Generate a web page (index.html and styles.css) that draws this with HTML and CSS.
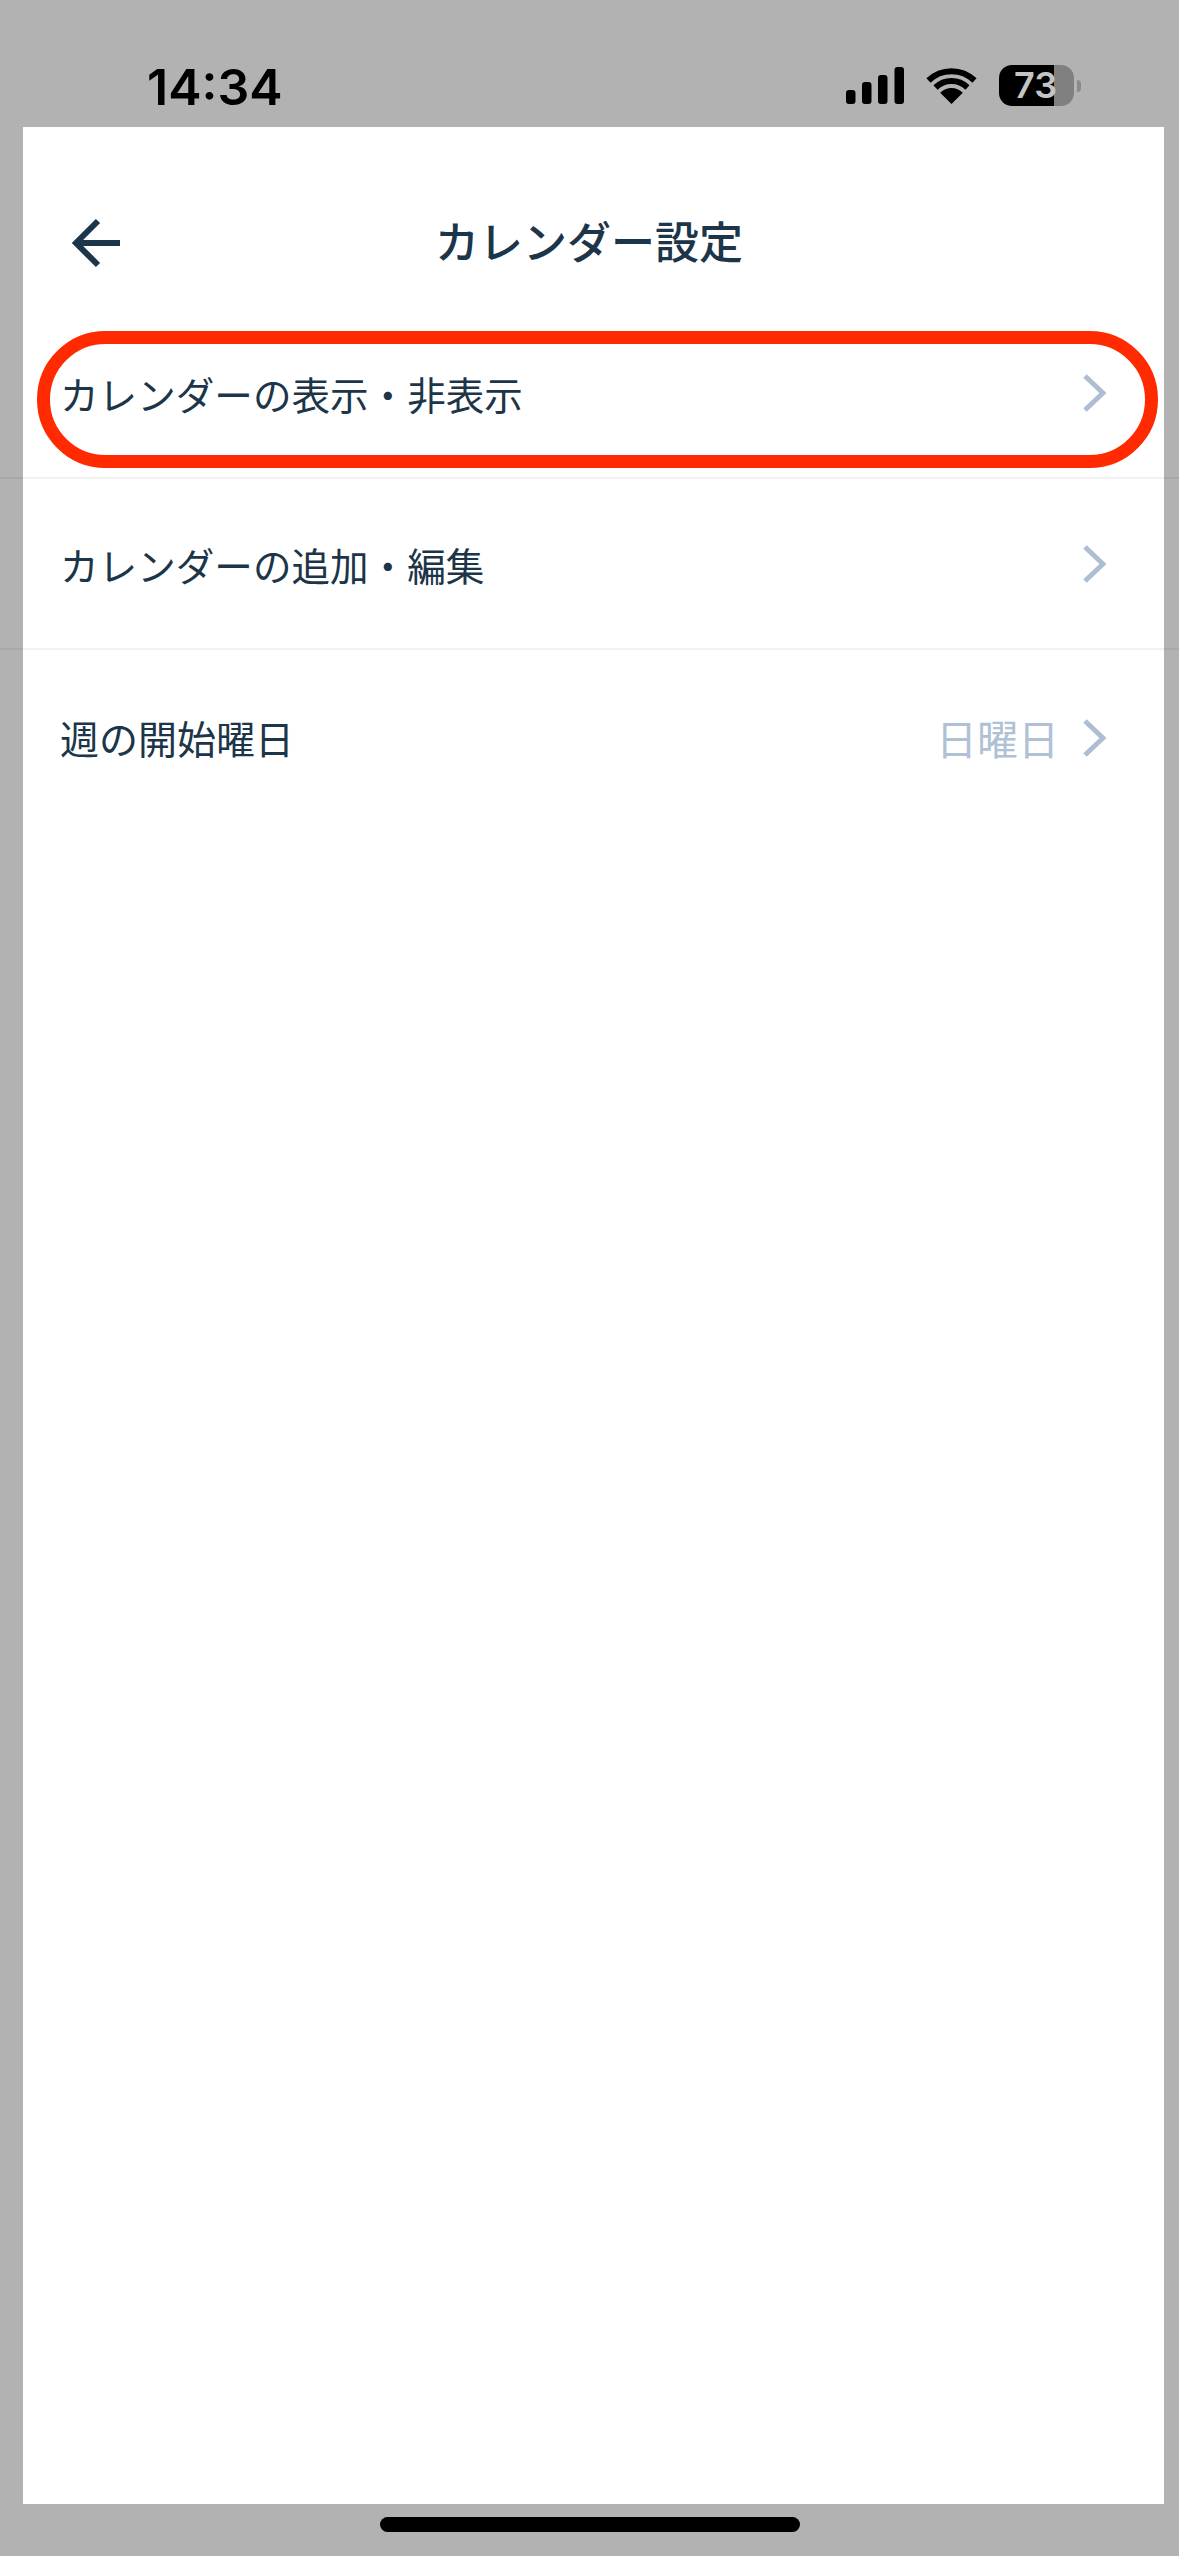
FILE: index.html
```html
<!DOCTYPE html>
<html lang="ja">
<head>
<meta charset="utf-8">
<title>カレンダー設定</title>
<link rel="stylesheet" href="styles.css">
</head>
<body>
<div class="screen">
  <div class="status-bar">
    <span class="time">14:34</span>
    <div class="status-icons">
      <svg class="signal" width="58" height="37" viewBox="0 0 58 37">
        <rect x="0" y="23" width="9.5" height="14" rx="3"/>
        <rect x="16" y="15" width="9.5" height="22" rx="3"/>
        <rect x="32" y="8" width="9.5" height="29" rx="3"/>
        <rect x="48.5" y="0" width="9.5" height="37" rx="3"/>
      </svg>
      <svg class="wifi" width="51" height="37" viewBox="0 0 51 37">
        <path class="wifi-band" d="M2.5 13.5A33 33 0 0 1 48.5 13.5"/>
        <path class="wifi-band" d="M9.5 20.5A23 23 0 0 1 41.5 20.5"/>
        <path d="M14.2 25.7A16 16 0 0 1 36.8 25.7L25.5 37Z"/>
      </svg>
      <div class="battery">
        <div class="battery-body"><span>73</span></div>
        <i class="battery-nub"></i>
      </div>
    </div>
  </div>
  <main class="card">
    <header class="nav">
      <svg class="back" width="48" height="50" viewBox="0 0 48 50">
        <path d="M48 25H4M26 3L4 25L26 47"/>
      </svg>
      <h1 class="title">カレンダー設定</h1>
    </header>
    <div class="row highlighted">
      <span class="label">カレンダーの表示・非表示</span>
      <svg class="chevron" width="23" height="38" viewBox="0 0 23 38"><path d="M2 2L20 19L2 36"/></svg>
      <div class="ring"></div>
    </div>
    <div class="row">
      <span class="label">カレンダーの追加・編集</span>
      <svg class="chevron" width="23" height="38" viewBox="0 0 23 38"><path d="M2 2L20 19L2 36"/></svg>
    </div>
    <div class="row last">
      <span class="label wide">週の開始曜日</span>
      <span class="value">日曜日</span>
      <svg class="chevron" width="23" height="38" viewBox="0 0 23 38"><path d="M2 2L20 19L2 36"/></svg>
    </div>
  </main>
  <div class="home-area"><div class="home-bar"></div></div>
</div>
</body>
</html>
```

FILE: styles.css
```css
* { box-sizing: border-box; }
html, body { margin: 0; padding: 0; }
body {
  width: 1179px;
  height: 2556px;
  background: #b2b2b2;
  overflow: hidden;
  font-family: "Noto Sans CJK JP", "Noto Sans", sans-serif;
  color: #1c3548;
}
.screen {
  display: flex;
  flex-direction: column;
  height: 2556px;
}
.status-bar {
  height: 127px;
  flex: none;
  display: flex;
  justify-content: space-between;
  align-items: flex-start;
  padding: 57px 98px 0 147px;
}
.time {
  font-family: Inter, "Liberation Sans", sans-serif;
  font-weight: 600;
  font-size: 50px;
  line-height: 60px;
  color: #000;
}
.status-icons {
  display: flex;
  align-items: flex-start;
  gap: 22px;
  padding-top: 10px;
}
.signal, .wifi { fill: #000; display: block; }
.wifi-band { fill: none; stroke: #000; stroke-width: 6; }
.battery {
  display: flex;
  align-items: center;
  gap: 3px;
  margin-top: -2px;
}
.battery-body {
  width: 75px;
  height: 41px;
  border-radius: 13px;
  background: linear-gradient(90deg, #000 73.3%, #808080 73.3%);
  display: flex;
  align-items: center;
  padding-left: 15px;
}
.battery-body span {
  font-family: Inter, "Liberation Sans", sans-serif;
  font-weight: 600;
  font-size: 36px;
  line-height: 41px;
  color: #c4c4c4;
}
.battery-nub {
  width: 4px;
  height: 12px;
  background: #8a8a8a;
  border-radius: 0 6px 6px 0;
}
.card {
  flex: 1;
  margin: 0 15px 0 23px;
  background: #fff;
}
.nav {
  height: 181px;
  padding: 52px 0 0 49px;
  display: flex;
  align-items: flex-start;
}
.back {
  display: block;
  margin-top: 39px;
  fill: none;
  stroke: #1c3548;
  stroke-width: 6;
}
.title {
  margin: 0 0 0 315px;
  font-weight: 500;
  font-size: 44px;
  line-height: 123px;
  color: #1c3548;
}
.row {
  position: relative;
  height: 171px;
  margin: 0 -15px 0 -23px;
  padding: 0 73px 0 60px;
  border-bottom: 2px solid rgba(0, 0, 0, 0.055);
  display: flex;
  align-items: center;
}
.row.last {
  height: 176px;
  border-bottom: none;
}
.label {
  flex: 1;
  font-size: 38.6px;
  line-height: 56px;
  color: #1c3548;
}
.label.wide {
  font-size: 39px;
  margin-bottom: 2px;
}
.value {
  font-size: 41px;
  line-height: 56px;
  color: #b0c1d5;
  margin: 0 24px 2px 0;
}
.chevron {
  display: block;
  flex: none;
  fill: none;
  stroke: #adbdd2;
  stroke-width: 5;
}
.ring {
  position: absolute;
  left: 37px;
  top: 23px;
  width: 1121px;
  height: 137px;
  border: 13px solid #ff2a00;
  border-radius: 69px;
}
.home-area {
  flex: none;
  height: 52px;
  padding-top: 13px;
}
.home-bar {
  width: 420px;
  height: 15px;
  margin-left: 380px;
  background: #000;
  border-radius: 8px;
}
```
